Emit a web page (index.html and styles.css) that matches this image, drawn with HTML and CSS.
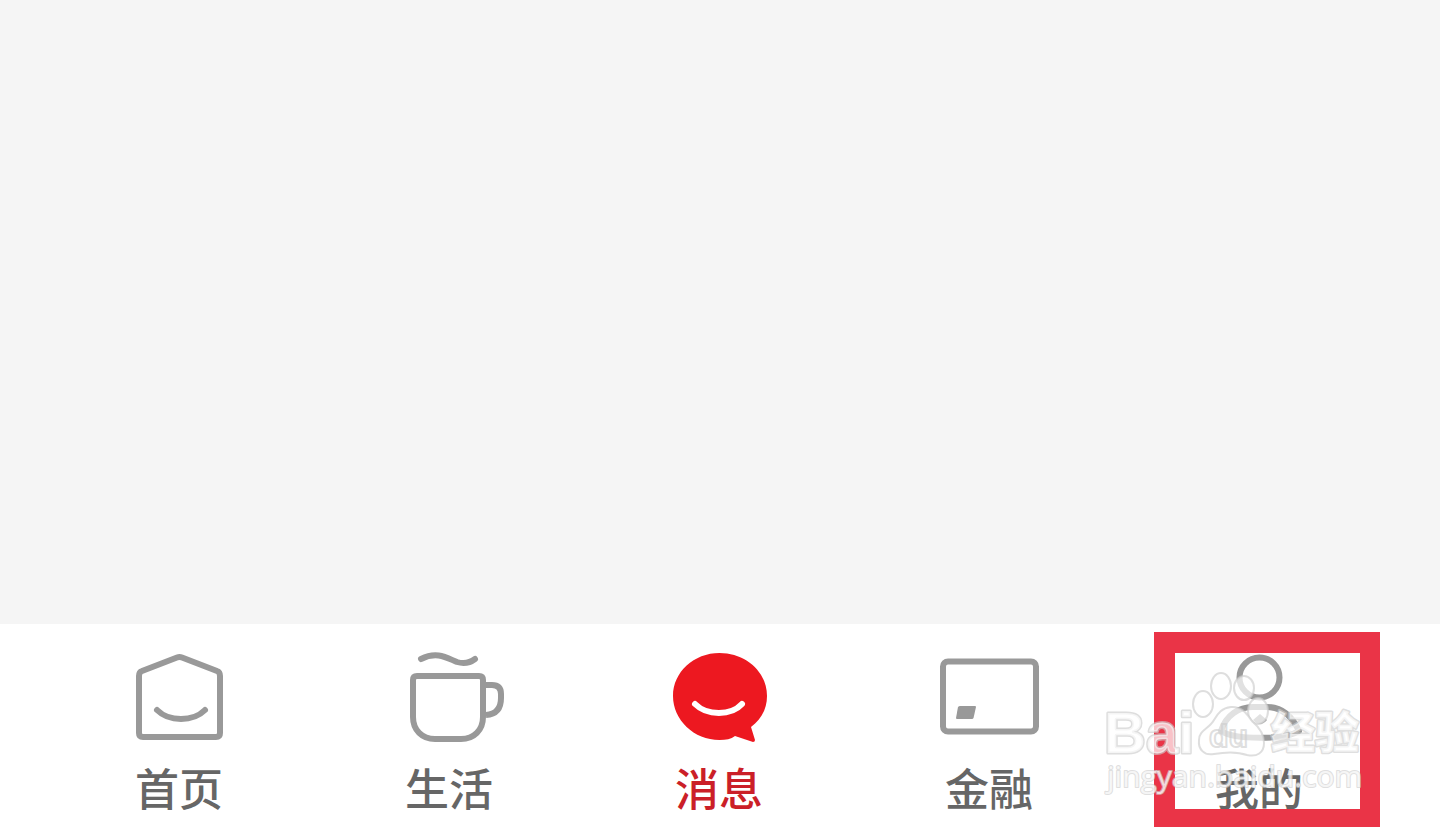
FILE: index.html
```html
<!DOCTYPE html>
<html lang="zh-CN">
<head>
  <meta charset="UTF-8">
  <meta name="viewport" content="width=device-width, initial-scale=1.0">
  <title>消息</title>
  <link rel="stylesheet" href="styles.css">
</head>
<body>
  <main class="content"></main>

  <nav class="tabbar">
    <a class="tab" href="#home">
      <svg class="icon" viewBox="0 0 100 100" aria-hidden="true">
        <path d="M13 25 L48 11.500 Q50.500 10.500 53 11.500 L88 25 Q91 26 91 30 V87 Q91 91 87 91 H14 Q10 91 10 87 V30 Q10 26 13 25 Z"/>
        <path d="M28 64 C40 76 64 76 76 64"/>
      </svg>
      <span class="label">首页</span>
    </a>
    <a class="tab" href="#life">
      <svg class="icon" viewBox="0 0 100 100" aria-hidden="true">
        <path d="M22 13 C38 5 48 12 58 16 Q68 19 76 13"/>
        <path d="M18 30 H80 Q84 30 84 34 V71 C84 84 75 93 62 93 H36 C23 93 14 84 14 71 V34 Q14 30 18 30 Z"/>
        <path d="M87 39 H93 Q102 39 102 48 V52 Q102 68 87 69" stroke-linecap="butt"/>
      </svg>
      <span class="label">生活</span>
    </a>
    <a class="tab active" href="#message">
      <svg class="icon" viewBox="0 0 100 100" aria-hidden="true">
        <path class="solid" d="M50.500 7 C77 7 98 26 98 50 C98 63 92 74 82 81 L86 94 Q86 96 84 96 L66 90 C62 93 57 94 50.500 94 C25 94 4 74 4 50 C4 26 25 7 50.500 7 Z"/>
        <path class="smile" d="M26 58 C38 70 62 70 73 58"/>
      </svg>
      <span class="label">消息</span>
    </a>
    <a class="tab" href="#finance">
      <svg class="icon" viewBox="0 0 100 100" aria-hidden="true">
        <rect x="4" y="15.500" width="93" height="70" rx="5"/>
        <path class="solid" d="M21 60 H36 Q37 60 37 61 L34.500 72 Q34 73 33 73 H18 Q17 73 17 72 L19 61 Q20 60 21 60 Z"/>
      </svg>
      <span class="label">金融</span>
    </a>
    <a class="tab" href="#mine">
      <svg class="icon" viewBox="0 0 100 100" aria-hidden="true">
        <circle cx="50.500" cy="31.500" r="20"/>
        <path d="M12 85 C17 69 30 61 44 61 H58 C72 61 83 70 90 85 C76 94 26 94 12 85 Z"/>
        <path class="solid" d="M44 74 L51 68 L58 74 Q51 82 44 74 Z"/>
      </svg>
      <span class="label">我的</span>
      <span class="highlight"></span>
      <svg class="watermark" viewBox="0 0 270 140">
        <ellipse cx="103" cy="39" rx="10" ry="13"/>
        <ellipse cx="121" cy="21" rx="10" ry="13"/>
        <ellipse cx="144" cy="23" rx="10" ry="12"/>
        <ellipse cx="158" cy="46" rx="10" ry="13"/>
        <path d="M131 42 C143 41 148 51 153 57 C160 63 164 69 164 78 C164 88 157 92 147 90 C136 86 125 87 114 89 C104 91 98 84 99 75 C99 65 109 64 114 55 C118 48 122 43 131 42 Z"/>
        <text class="wm-brand" x="4" y="88">Bai</text>
        <text class="wm-du" x="109" y="82">du</text>
        <text class="wm-cn" x="171" y="84">经验</text>
        <text class="wm-url" x="7" y="122">jingyan.baidu.com</text>
      </svg>
    </a>
  </nav>
</body>
</html>
```
FILE: styles.css
```css
* {
  box-sizing: border-box;
}
body {
  margin: 0;
  min-height: 100vh;
  display: flex;
  flex-direction: column;
  overflow: hidden;
  font-family: "Noto Sans CJK SC", sans-serif;
  background-color: #f5f5f5;
}
.content {
  flex: 1;
}
.tabbar {
  display: flex;
  padding: 0 46px 0 44px;
  background-color: #fff;
}
.tab {
  position: relative;
  flex: 1;
  display: flex;
  flex-direction: column;
  align-items: center;
  gap: 15px;
  padding: 22px 0 14px;
  color: #666;
  text-decoration: none;
}
.icon {
  width: 100px;
  height: 100px;
  overflow: visible;
  fill: none;
  stroke: #999;
  stroke-width: 6;
  stroke-linecap: round;
  stroke-linejoin: round;
}
.icon .solid {
  fill: #999;
  stroke: none;
}
.label {
  font-size: 44px;
  font-weight: 500;
  line-height: 52px;
}
.active {
  color: #cb1f28;
}
.active .solid {
  fill: #ed1820;
}
.active .smile {
  stroke: #fff;
}
/* red frame around the last tab */
.highlight {
  position: absolute;
  top: 8px;
  right: 14px;
  bottom: 0;
  left: 30px;
  border: solid #ea3447;
  border-width: 21px 20px 18px 21px;
}
.watermark {
  position: absolute;
  right: 24px;
  bottom: 22px;
  width: 270px;
  height: 140px;
  overflow: visible;
  fill: rgba(255, 255, 255, 0.7);
  stroke: rgba(205, 205, 205, 0.65);
  stroke-width: 2;
  stroke-linejoin: round;
}
.wm-brand,
.wm-du {
  font-family: "Liberation Sans", sans-serif;
  font-weight: bold;
}
.wm-brand {
  font-size: 58px;
  stroke-width: 3;
}
.wm-du {
  font-size: 32px;
  fill: none;
}
.wm-cn {
  font-size: 44px;
  font-weight: 900;
  stroke-width: 3;
}
.wm-url {
  font-family: "Open Sans", sans-serif;
  font-size: 30px;
}
.wm-brand,
.wm-cn,
.wm-url {
  paint-order: stroke;
}
```
